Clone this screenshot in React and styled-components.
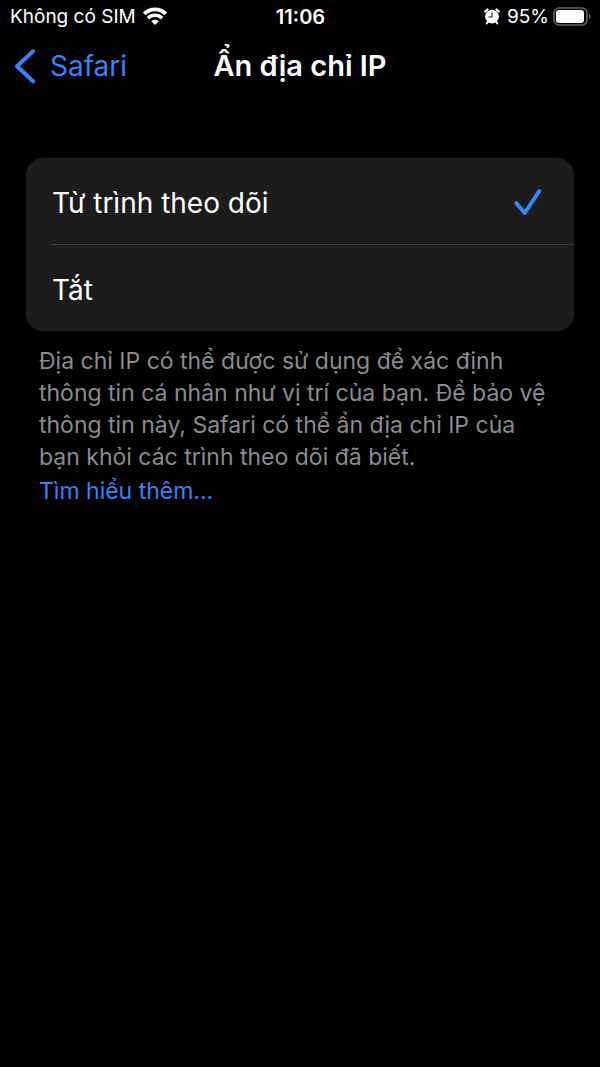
import React, { useState } from "react";
import styled, { createGlobalStyle } from "styled-components";

const GlobalStyle = createGlobalStyle`
  * {
    box-sizing: border-box;
  }

  body {
    margin: 0;
    background: #000000;
    color: #ffffff;
    font-family: Inter, "Noto Sans", sans-serif;
  }
`;

const Screen = styled.div`
  min-height: 100vh;
  background: #000000;
`;

const StatusBar = styled.div`
  display: grid;
  grid-template-columns: 1fr auto 1fr;
  align-items: center;
  height: 32px;
  padding: 1px 9px 0 10px;
  font-size: 19px;
  line-height: 24px;
`;

const StatusGroup = styled.div`
  display: flex;
  align-items: center;
  justify-content: ${props => (props.$end ? "flex-end" : "flex-start")};
  gap: ${props => (props.$end ? "4px" : "6px")};
`;

const Time = styled.time`
  font-size: 20px;
  font-weight: 600;
`;

const NavBar = styled.header`
  display: grid;
  grid-template-columns: 1fr auto 1fr;
  align-items: center;
  height: 68px;
  padding: 0 14px;
`;

const BackButton = styled.button`
  display: flex;
  align-items: center;
  justify-self: start;
  gap: 14px;
  padding: 0;
  border: 0;
  background: none;
  color: #3a82f7;
  font-family: inherit;
  font-size: 28px;
  line-height: 36px;
  cursor: pointer;
`;

const Title = styled.h1`
  margin: 0;
  font-size: 29px;
  font-weight: 600;
  line-height: 36px;
`;

const Content = styled.main`
  padding: 58px 26px 0;
`;

const Options = styled.div`
  background: #1c1c1d;
  border-radius: 17px;
`;

const Option = styled.label`
  display: flex;
  padding-left: 26px;
  font-size: 28px;
  line-height: 36px;
  cursor: pointer;
`;

const OptionBody = styled.span`
  display: flex;
  flex: 1;
  align-items: center;
  justify-content: space-between;
  min-height: 86px;
  padding: 4px 32px 0 0;

  ${Option} + ${Option} & {
    min-height: 87px;
    border-top: 1px solid #3d3d40;
  }
`;

const Radio = styled.input`
  appearance: none;
  width: 0;
  height: 0;
  margin: 0;
`;

const Footer = styled.div`
  padding: 14px 22px 0 13px;
  color: #8b8b90;
  font-size: 23px;
  line-height: 32px;
`;

const Description = styled.p`
  margin: 0 0 2px;
`;

const Link = styled.a`
  color: #3a82f7;
  text-decoration: none;
`;

const WifiIcon = () => (
  <svg width="26" height="19" viewBox="0 0 26 19" fill="none" aria-hidden="true">
    <path d="M2.2 6.8C8.2 1 17.8 1 23.8 6.8" stroke="#fff" strokeWidth="3.8" />
    <path d="M6 11.2C10 7.4 16 7.4 20 11.2" stroke="#fff" strokeWidth="3.5" />
    <path d="M9.2 14.2C11.4 12.1 14.6 12.1 16.8 14.2L13 18Z" fill="#fff" />
  </svg>
);

const AlarmIcon = () => (
  <svg width="19" height="17" viewBox="0 0 19 17" fill="none" aria-hidden="true">
    <path
      d="M1.2 3.6L3.6 1.4M12.4 1.4L14.8 3.6M4 13.5L2.6 15.5M12 13.5L13.4 15.5"
      stroke="#fff"
      strokeWidth="2"
      strokeLinecap="round"
    />
    <circle cx="8" cy="8.6" r="6.9" fill="#fff" />
    <path d="M8 4.8V9H4.8" stroke="#222" strokeWidth="1.1" strokeLinecap="round" />
  </svg>
);

const BatteryIcon = () => (
  <svg width="38" height="20" viewBox="0 0 38 20" fill="none" aria-hidden="true">
    <rect x="1" y="1" width="33" height="17" rx="5" stroke="#66666a" strokeWidth="1.6" />
    <rect x="3" y="3" width="28" height="13" rx="3" fill="#fff" />
    <path d="M36 6.5C38 7.4 38 11.6 36 12.5Z" fill="#66666a" />
  </svg>
);

const BackIcon = () => (
  <svg width="22" height="36" viewBox="0 0 22 36" fill="none" aria-hidden="true">
    <path
      d="M19 3.3L3 18.3L19 33.3"
      stroke="currentColor"
      strokeWidth="4"
      strokeLinecap="round"
      strokeLinejoin="round"
    />
  </svg>
);

const CheckIcon = () => (
  <svg width="28" height="28" viewBox="0 0 28 28" fill="none" aria-hidden="true">
    <path
      d="M2.4 14.2L10.8 24L25.2 2.2"
      stroke="#3a82f7"
      strokeWidth="4"
      strokeLinecap="round"
      strokeLinejoin="round"
    />
  </svg>
);

const options = [
  { id: "trackers", label: "Từ trình theo dõi" },
  { id: "off", label: "Tắt" }
];

const App = () => {
  const [selected, setSelected] = useState("trackers");

  return (
    <Screen>
      <GlobalStyle />
      <StatusBar>
        <StatusGroup>
          Không có SIM
          <WifiIcon />
        </StatusGroup>
        <Time>11:06</Time>
        <StatusGroup $end>
          <AlarmIcon />
          95%
          <BatteryIcon />
        </StatusGroup>
      </StatusBar>
      <NavBar>
        <BackButton type="button">
          <BackIcon />
          Safari
        </BackButton>
        <Title>Ẩn địa chỉ IP</Title>
      </NavBar>
      <Content>
        <Options role="radiogroup" aria-label="Ẩn địa chỉ IP">
          {options.map(option => (
            <Option key={option.id}>
              <Radio
                type="radio"
                name="hide-ip"
                checked={selected === option.id}
                onChange={() => setSelected(option.id)}
              />
              <OptionBody>
                {option.label}
                {selected === option.id && <CheckIcon />}
              </OptionBody>
            </Option>
          ))}
        </Options>
        <Footer>
          <Description>
            Địa chỉ IP có thể được sử dụng để xác định thông tin cá nhân như vị
            trí của bạn. Để bảo vệ thông tin này, Safari có thể ẩn địa chỉ IP
            của bạn khỏi các trình theo dõi đã biết.
          </Description>
          <Link href="#more">Tìm hiểu thêm...</Link>
        </Footer>
      </Content>
    </Screen>
  );
};

export default App;
